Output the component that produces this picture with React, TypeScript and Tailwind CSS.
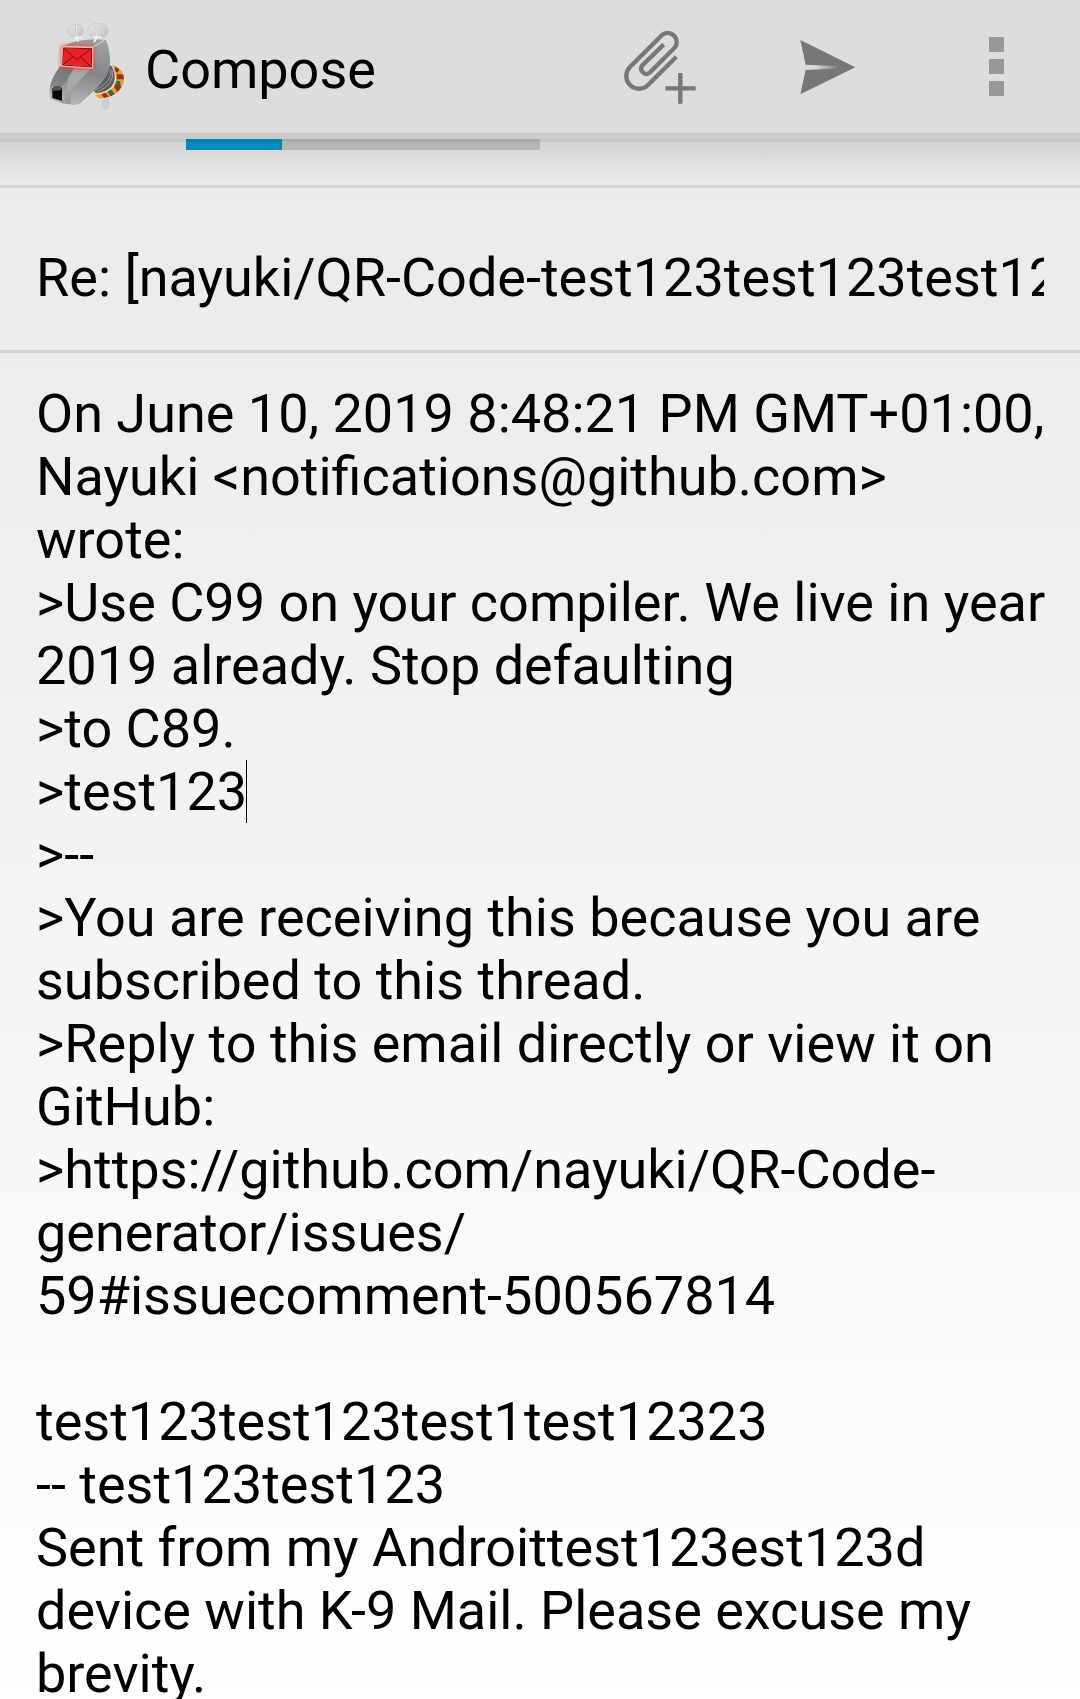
import React from "react";

const SUBJECT = "Re: [nayuki/QR-Code-test123test123test123test123";

const MESSAGE = [
  "On June 10, 2019 8:48:21 PM GMT+01:00, Nayuki <notifications@github.com>",
  "wrote:",
  ">Use C99 on your compiler. We live in year 2019 already. Stop defaulting",
  ">to C89.",
  ">test123",
  ">--",
  ">You are receiving this because you are subscribed to this thread.",
  ">Reply to this email directly or view it on GitHub:",
  ">https://github.com/nayuki/QR-Code-generator/issues/",
  "59#issuecomment-500567814",
  "",
  "test123test123test1test12323",
  "-- test123test123",
  "Sent from my Androittest123est123d device with K-9 Mail. Please excuse my brevity.",
].join("\n");

function DogLogo() {
  return (
    <svg viewBox="0 0 330 330" className="size-[110px] shrink-0" aria-hidden="true">
      <defs>
        <linearGradient id="head" x1="0" y1="0" x2="1" y2="1">
          <stop offset="0" stopColor="#8d8e90" />
          <stop offset="0.5" stopColor="#a3a4a6" />
          <stop offset="1" stopColor="#7b7c7e" />
        </linearGradient>
        <linearGradient id="side" x1="0.3" y1="0" x2="0.2" y2="1">
          <stop offset="0" stopColor="#a0a1a3" />
          <stop offset="0.5" stopColor="#848588" />
          <stop offset="1" stopColor="#b4b5b7" />
        </linearGradient>
        <linearGradient id="snout" x1="0.7" y1="0" x2="0.2" y2="1">
          <stop offset="0" stopColor="#77787a" />
          <stop offset="0.5" stopColor="#98999b" />
          <stop offset="1" stopColor="#c0c1c2" />
        </linearGradient>
        <linearGradient id="ear" x1="0" y1="0" x2="1" y2="1">
          <stop offset="0" stopColor="#e4e4e4" />
          <stop offset="1" stopColor="#c2c2c2" />
        </linearGradient>
        <filter id="glow" x="-30%" y="-30%" width="160%" height="160%">
          <feGaussianBlur stdDeviation="7" />
        </filter>
      </defs>
      <path d="M218 272L236 266Q238 290 228 299Q214 294 218 272Z" fill="#d0d0d0" stroke="#bdbdbd" strokeWidth="2" />
      <path d="M246 166Q268 170 279 192Q288 222 266 244Q240 266 208 266L190 252Q236 250 252 222Q262 196 246 166Z" fill="#e0a038" />
      <path d="M256 170L268 178L262 188L254 182ZM261 192L280 194L282 208L260 208ZM250 226L262 214L274 232L262 246ZM232 244L242 236L254 252L242 259Z" fill="#a02a24" />
      <path d="M258 212L270 214L272 228L256 226ZM232 243L241 237L252 252L242 258Z" fill="#2f6b46" />
      <path d="M214 251L226 247L236 260L222 264Z" fill="#a02a24" />
      <path d="M246 168Q270 216 240 238Q222 252 192 253" fill="none" stroke="#f8e2a6" strokeWidth="4" />
      <path d="M236 162L246 170Q264 206 244 230Q226 248 198 250L190 240Z" fill="#5d5e60" />
      <path d="M242 176Q252 212 194 242M247 182Q256 222 200 247" fill="none" stroke="#9c9c9e" strokeWidth="3" />
      <path d="M104 107Q130 91 192 88L226 89Q240 118 240 165Q234 202 195 239L148 281Q132 286 94 280L60 266L59 238Q62 208 98 166Z" fill="url(#head)" />
      <path d="M220 92L228 90Q240 118 240 165Q234 202 195 239L148 281Q138 284 122 283L124 240L180 172L188 112Z" fill="url(#side)" />
      <path d="M90 169L135 174L118 192Q110 211 111 244L94 280L60 266L59 238Q62 208 90 169Z" fill="url(#snout)" />
      <path d="M132 174L183 174L126 237L110 244Q110 208 132 174Z" fill="#a7a8aa" />
      <path d="M90 170Q61 207 60 238Q72 220 94 231L123 190L131 175Z" fill="#737477" opacity="0.65" />
      <path d="M104 106Q140 91 221 93L187 112Z" fill="#98999c" />
      <path d="M187 112L221 92" stroke="#dedede" strokeWidth="3" />
      <path d="M67 235Q80 222 96 234V273L67 264Z" fill="#050505" />
      <path d="M69 243V233Q80 223 94 232V240Z" fill="#555" />
      <rect x="93" y="107" width="98" height="70" rx="8" fill="#ff2929" opacity="0.8" filter="url(#glow)" />
      <path d="M99 111L187 113L186 173L96 167Z" fill="#ee2027" stroke="#ffaaa5" strokeWidth="7" strokeLinejoin="round" />
      <path d="M101 114L185 116L184 171L98 165ZM101 114L140 149L185 116M98 165L130 140M184 171L151 141" fill="none" stroke="#711514" strokeWidth="3" strokeLinejoin="round" />
      <rect x="113" y="43" width="46" height="40" rx="20" fill="url(#ear)" stroke="#c4c4c4" strokeWidth="2" />
      <rect x="173" y="41" width="61" height="43" rx="21" fill="url(#ear)" stroke="#c4c4c4" strokeWidth="2" />
      <path d="M136 47L139 81L144 95M208 45L201 80L192 97" fill="none" stroke="#f0f0f0" strokeWidth="6" />
      <path d="M136 47L138 80M208 45L202 79" fill="none" stroke="#acacac" strokeWidth="2" />
      <path d="M134 83L151 81M190 81L213 82" stroke="#f2f2f2" strokeWidth="5" strokeLinecap="round" />
    </svg>
  );
}

function AttachIcon() {
  return (
    <svg viewBox="0 0 360 330" className="h-[110px] w-[120px]" fill="none" stroke="#777" strokeWidth="13" aria-hidden="true">
      <path d="M229 140L144 225A38 38 0 0 1 90 171L186 75A27 27 0 0 1 224 113L148 189A16 16 0 0 1 126 167L191 104" />
      <path d="M196 235H287M241 189V281" />
    </svg>
  );
}

function SendIcon() {
  return (
    <svg viewBox="0 0 330 330" className="size-[110px]" aria-hidden="true">
      <defs>
        <linearGradient id="crease" x1="0" x2="1">
          <stop offset="0.3" stopColor="#ddd" />
          <stop offset="1" stopColor="#777" />
        </linearGradient>
      </defs>
      <path d="M79 90L244 172L79 253L95 180V164Z" fill="#777" />
      <path d="M94 164L197 169V175L94 180Z" fill="url(#crease)" />
    </svg>
  );
}

export default function App() {
  return (
    <div className="flex h-screen flex-col overflow-hidden bg-linear-to-b from-[#e8e8e8] to-white font-[Roboto,sans-serif] text-[54px] leading-[63px] text-black">
      <header className="flex h-[139px] shrink-0 items-center border-b-6 border-[#cbcbcb] bg-[#ddd] pr-[76px] pb-[3px] pl-[30px]">
        <DogLogo />
        <h1 className="ml-[5px] flex-1 pt-2 font-normal">Compose</h1>
        <button type="button" aria-label="Add attachment" className="mr-[54px]">
          <AttachIcon />
        </button>
        <button type="button" aria-label="Send" className="mr-[105px]">
          <SendIcon />
        </button>
        <button type="button" aria-label="More options" className="flex h-[110px] flex-col gap-[7px] pt-[27px]">
          <span className="size-[15px] bg-[#999]" />
          <span className="size-[15px] bg-[#999]" />
          <span className="size-[15px] bg-[#999]" />
        </button>
      </header>

      <main className="flex min-h-0 flex-1 flex-col overflow-hidden">
        <div className="relative h-[49px] shrink-0 border-b-3 border-[#d4d4d4] px-[186px]">
          <div className="flex h-[11px] w-[354px] bg-[#c8c8c8]">
            <div className="w-24 bg-[#0099cc]" />
          </div>
          <div className="absolute inset-x-0 top-0 h-[3px] bg-black/15" />
          <div className="absolute inset-x-0 top-[3px] h-10 bg-linear-to-b from-black/10 to-transparent" />
        </div>

        <div className="shrink-0 border-b-3 border-[#d4d4d4] px-9 pt-[58px] pb-[41px]">
          <input
            type="text"
            aria-label="Subject"
            defaultValue={SUBJECT}
            className="block h-[63px] w-full outline-none"
          />
        </div>

        <div className="relative shrink-0 pt-[29px] pr-6 pl-9">
          <textarea
            aria-label="Message text"
            defaultValue={MESSAGE}
            spellCheck={false}
            className="block field-sizing-content w-full resize-none overflow-hidden outline-none"
          />
          <span className="absolute top-[407px] left-[246px] h-[63px] w-px bg-black" />
        </div>
      </main>
    </div>
  );
}
